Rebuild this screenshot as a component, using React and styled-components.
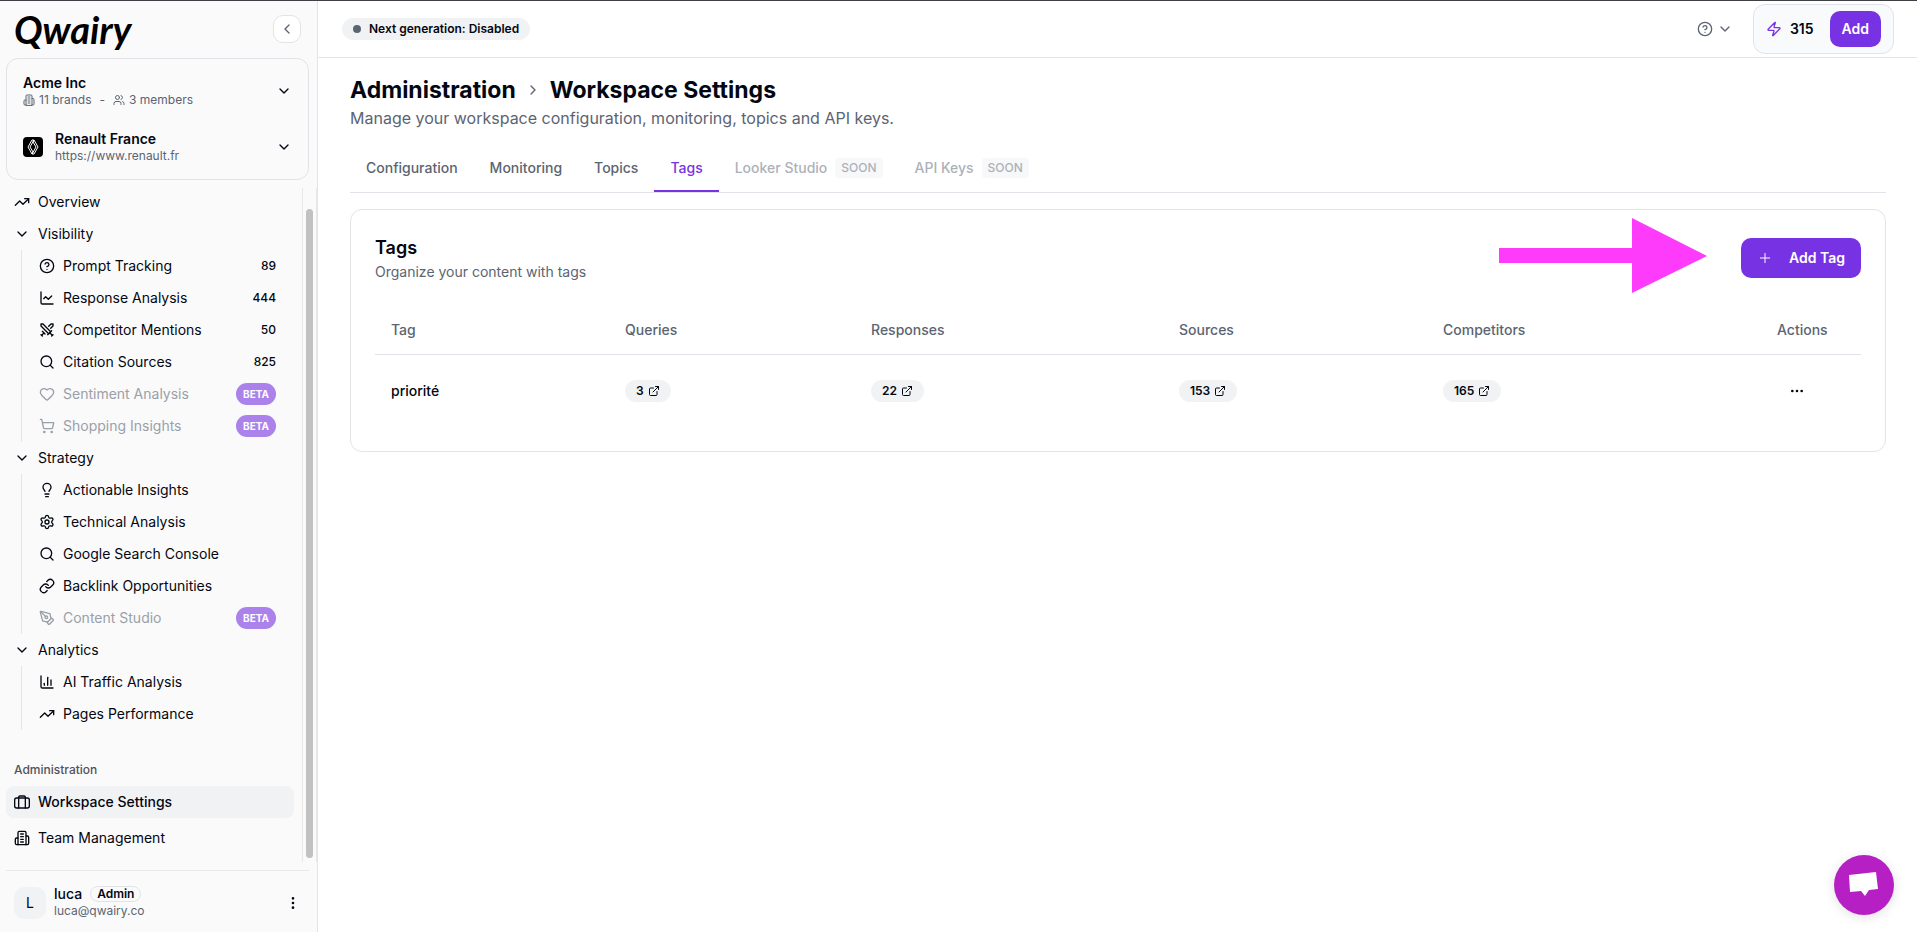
import React, { useState } from "react";
import { createGlobalStyle, styled } from "styled-components";
import {
  ChartColumn,
  ChartLine,
  ChevronDown,
  ChevronLeft,
  ChevronRight,
  CircleQuestionMark,
  Ellipsis,
  EllipsisVertical,
  ExternalLink,
  Heart,
  Lightbulb,
  Link,
  PenTool,
  Plus,
  Search,
  Settings,
  ShoppingCart,
  Swords,
  TrendingUp,
  Users,
  Zap,
} from "lucide-react";

const OutlineIcon = ({ size = 16, children }) => (
  <svg
    width={size}
    height={size}
    viewBox="0 0 24 24"
    fill="none"
    stroke="currentColor"
    strokeWidth="2"
    strokeLinecap="round"
    strokeLinejoin="round"
  >
    {children}
  </svg>
);

const SuitcaseIcon = () => (
  <OutlineIcon>
    <rect x="1" y="6" width="22" height="15" rx="3" />
    <path d="M7 21V5a2 2 0 0 1 2-2h6a2 2 0 0 1 2 2v16" />
  </OutlineIcon>
);

const BuildingIcon = ({ size }) => (
  <OutlineIcon size={size}>
    <path d="M6 22V4a2 2 0 0 1 2-2h8a2 2 0 0 1 2 2v18Z" />
    <path d="M6 12H4a2 2 0 0 0-2 2v6a2 2 0 0 0 2 2h2" />
    <path d="M18 9h2a2 2 0 0 1 2 2v9a2 2 0 0 1-2 2h-2" />
    <path d="M10 6h4M10 10h4M10 14h4M10 18h4" />
  </OutlineIcon>
);

const RenaultIcon = () => (
  <svg width="20" height="20" viewBox="0 0 20 20" fill="none" stroke="#fff">
    <rect width="20" height="20" rx="4" fill="#000" stroke="none" />
    <path d="M9 3 5 10l4 7 1-2-3-5 4-7z" />
    <path d="m11 17 4-7-4-7-1 2 3 5-4 7z" />
  </svg>
);

const groups = [
  {
    title: "Visibility",
    items: [
      { icon: CircleQuestionMark, label: "Prompt Tracking", count: 89 },
      { icon: ChartLine, label: "Response Analysis", count: 444 },
      { icon: Swords, label: "Competitor Mentions", count: 50 },
      { icon: Search, label: "Citation Sources", count: 825 },
      { icon: Heart, label: "Sentiment Analysis", beta: true },
      { icon: ShoppingCart, label: "Shopping Insights", beta: true },
    ],
  },
  {
    title: "Strategy",
    items: [
      { icon: Lightbulb, label: "Actionable Insights" },
      { icon: Settings, label: "Technical Analysis" },
      { icon: Search, label: "Google Search Console" },
      { icon: Link, label: "Backlink Opportunities" },
      { icon: PenTool, label: "Content Studio", beta: true },
    ],
  },
  {
    title: "Analytics",
    items: [
      { icon: ChartColumn, label: "AI Traffic Analysis" },
      { icon: TrendingUp, label: "Pages Performance" },
    ],
  },
];

const tabs = [
  { label: "Configuration" },
  { label: "Monitoring" },
  { label: "Topics" },
  { label: "Tags" },
  { label: "Looker Studio", soon: true },
  { label: "API Keys", soon: true },
];

const tags = [
  { name: "priorité", queries: 3, responses: 22, sources: 153, competitors: 165 },
];

const Sidebar = () => {
  return (
    <Aside>
      <SidebarTop>
        <Logo href="#">Qwairy</Logo>
        <CollapseButton aria-label="Collapse sidebar">
          <ChevronLeft size={16} />
        </CollapseButton>
      </SidebarTop>
      <Switcher>
        <SwitcherRow>
          <SwitcherText>
            <SwitcherName>Acme Inc</SwitcherName>
            <SwitcherMeta>
              <BuildingIcon size={12} />
              11 brands
              <Dash>-</Dash>
              <Users size={12} />3 members
            </SwitcherMeta>
          </SwitcherText>
          <ChevronDown size={16} />
        </SwitcherRow>
        <SwitcherRow>
          <RenaultIcon />
          <SwitcherText>
            <SwitcherName>Renault France</SwitcherName>
            <SwitcherMeta>https://www.renault.fr</SwitcherMeta>
          </SwitcherText>
          <ChevronDown size={16} />
        </SwitcherRow>
      </Switcher>
      <NavArea>
        <Nav>
          <NavLink href="#">
            <TrendingUp size={16} />
            Overview
          </NavLink>
          {groups.map((group) => (
            <React.Fragment key={group.title}>
              <GroupButton>
                <ChevronDown size={16} />
                {group.title}
              </GroupButton>
              <GroupItems>
                {group.items.map(({ icon: Icon, label, count, beta }) => (
                  <NavLink href="#" key={label} $muted={beta}>
                    <Icon size={16} />
                    <NavLabel>{label}</NavLabel>
                    {count && <Count>{count}</Count>}
                    {beta && <Beta>BETA</Beta>}
                  </NavLink>
                ))}
              </GroupItems>
            </React.Fragment>
          ))}
          <SectionTitle>Administration</SectionTitle>
          <AdminLinks>
            <NavLink href="#" $active>
              <SuitcaseIcon />
              Workspace Settings
            </NavLink>
            <NavLink href="#">
              <BuildingIcon />
              Team Management
            </NavLink>
          </AdminLinks>
        </Nav>
        <ScrollTrack>
          <ScrollThumb />
        </ScrollTrack>
      </NavArea>
      <UserRow>
        <Avatar>L</Avatar>
        <UserText>
          <UserName>
            luca <Role>Admin</Role>
          </UserName>
          <UserMail>luca@qwairy.co</UserMail>
        </UserText>
        <IconButton aria-label="Account menu">
          <EllipsisVertical size={16} />
        </IconButton>
      </UserRow>
    </Aside>
  );
};

const Topbar = () => {
  return (
    <Header>
      <Status>
        <Dot />
        Next generation: Disabled
      </Status>
      <HeaderActions>
        <HelpButton aria-label="Help">
          <CircleQuestionMark size={16} />
          <ChevronDown size={16} />
        </HelpButton>
        <Credits>
          <Zap size={16} />
          <strong>315</strong>
          <AddButton>Add</AddButton>
        </Credits>
      </HeaderActions>
    </Header>
  );
};

const CountLink = ({ value }) => (
  <CountPill href="#">
    {value}
    <ExternalLink size={12} />
  </CountPill>
);

const TagsCard = () => {
  return (
    <Card>
      <CardHeader>
        <div>
          <CardTitle>Tags</CardTitle>
          <CardText>Organize your content with tags</CardText>
        </div>
        <CardActions>
          <Arrow width="208" height="76" viewBox="0 0 208 76" aria-hidden="true">
            <path d="M0 30h133V0l75 38-75 37V45H0z" fill="#ff3bfb" />
          </Arrow>
          <AddTagButton>
            <Plus size={16} strokeWidth={1.5} />
            Add Tag
          </AddTagButton>
        </CardActions>
      </CardHeader>
      <Table>
        <colgroup>
          <Col $share={234} />
          <Col $share={246} />
          <Col $share={308} />
          <Col $share={264} />
          <Col $share={334} />
          <Col $share={100} />
        </colgroup>
        <thead>
          <tr>
            <Th>Tag</Th>
            <Th>Queries</Th>
            <Th>Responses</Th>
            <Th>Sources</Th>
            <Th>Competitors</Th>
            <Th>Actions</Th>
          </tr>
        </thead>
        <tbody>
          {tags.map((tag) => (
            <tr key={tag.name}>
              <Td>{tag.name}</Td>
              <Td>
                <CountLink value={tag.queries} />
              </Td>
              <Td>
                <CountLink value={tag.responses} />
              </Td>
              <Td>
                <CountLink value={tag.sources} />
              </Td>
              <Td>
                <CountLink value={tag.competitors} />
              </Td>
              <Td>
                <IconButton aria-label="Tag actions">
                  <Ellipsis size={16} />
                </IconButton>
              </Td>
            </tr>
          ))}
        </tbody>
      </Table>
    </Card>
  );
};

const App = () => {
  const [tab, setTab] = useState("Tags");

  return (
    <>
      <GlobalStyle />
      <Layout>
        <Sidebar />
        <Main>
          <Topbar />
          <Content>
            <Title>
              Administration
              <ChevronRight size={16} strokeWidth={2} />
              Workspace Settings
            </Title>
            <Subtitle>
              Manage your workspace configuration, monitoring, topics and API
              keys.
            </Subtitle>
            <Tabs role="tablist">
              {tabs.map(({ label, soon }) => (
                <Tab
                  key={label}
                  role="tab"
                  aria-selected={tab === label}
                  $active={tab === label}
                  disabled={soon}
                  onClick={() => setTab(label)}
                >
                  {label}
                  {soon && <Soon>SOON</Soon>}
                </Tab>
              ))}
            </Tabs>
            <TagsCard />
          </Content>
        </Main>
      </Layout>
      <ChatButton aria-label="Open chat">
        <svg width="30" height="26" viewBox="0 0 30 26" fill="#fff">
          <path d="M0 3 27 0l2 17-9 1-4 6-4-5-11 1z" />
        </svg>
      </ChatButton>
    </>
  );
};

const GlobalStyle = createGlobalStyle`
  * {
    box-sizing: border-box;
  }
  body {
    margin: 0;
    background: #fff;
    color: #030712;
    font-family: Inter, "Liberation Sans", sans-serif;
    font-size: 14px;
    line-height: 20px;
  }
  button {
    font: inherit;
    color: inherit;
    background: none;
    border: 0;
    padding: 0;
    cursor: pointer;
  }
  a {
    color: inherit;
    text-decoration: none;
  }
  svg {
    display: block;
    flex-shrink: 0;
  }
`;
const Layout = styled.div`
  display: flex;
  min-height: 100vh;
  border-top: 1px solid #3f3f46;
`;

const Aside = styled.aside`
  display: flex;
  flex-direction: column;
  flex-shrink: 0;
  width: 318px;
  background: #fafafa;
  border-right: 1px solid #e4e4e7;
`;
const SidebarTop = styled.div`
  display: flex;
  align-items: center;
  justify-content: space-between;
  height: 57px;
  padding: 0 16px 2px 14px;
`;
const Logo = styled.a`
  font-family: Lato, sans-serif;
  font-size: 38px;
  font-style: italic;
  font-weight: 700;
  line-height: 44px;
  color: #000;
`;
const CollapseButton = styled.button`
  display: grid;
  place-items: center;
  width: 28px;
  height: 28px;
  color: #5b6472;
  background: #fff;
  border: 1px solid #e4e4e7;
  border-radius: 10px;
`;
const Switcher = styled.div`
  margin: 0 8px 0 6px;
  padding: 4px 0;
  border: 1px solid #e1e3e8;
  border-radius: 12px;
`;
const SwitcherRow = styled.button`
  display: flex;
  align-items: center;
  gap: 12px;
  width: 100%;
  height: 56px;
  padding: 0 16px;
  text-align: left;
`;
const SwitcherText = styled.div`
  flex: 1;
`;
const SwitcherName = styled.div`
  font-weight: 600;
  line-height: 17px;
`;
const SwitcherMeta = styled.div`
  display: flex;
  align-items: center;
  gap: 4px;
  font-size: 12px;
  line-height: 17px;
  color: #5b6472;
`;
const Dash = styled.span`
  margin: 0 4px;
`;
const NavArea = styled.div`
  display: flex;
  flex: 1;
  padding: 6px 0 0 6px;
`;
const Nav = styled.nav`
  flex: 1;
  padding-right: 8px;
`;
const NavLabel = styled.span`
  flex: 1;
`;
const NavLink = styled.a`
  display: flex;
  align-items: center;
  gap: 8px;
  height: 32px;
  padding: 0 8px;
  border-radius: 8px;
  white-space: nowrap;
  background: ${({ $active }) => ($active ? "#f1f2f4" : "transparent")};
  color: ${({ $muted }) => ($muted ? "#5b6472" : "#030712")};
  font-weight: ${({ $active }) => ($active ? 500 : 400)};
  opacity: ${({ $muted }) => ($muted ? 0.6 : 1)};
`;
const GroupButton = styled.button`
  display: flex;
  align-items: center;
  gap: 8px;
  width: 100%;
  height: 32px;
  padding: 0 8px;
`;
const GroupItems = styled.div`
  margin: 0 10px 0 15px;
  padding-left: 9px;
  border-left: 1px solid #e4e4e7;
`;
const Count = styled.span`
  font-size: 12px;
  font-weight: 500;
`;
const Beta = styled.span`
  padding: 0 7px;
  border-radius: 12px;
  background: #7733e3;
  color: #fff;
  font-size: 10px;
  font-weight: 700;
  line-height: 22px;
`;
const SectionTitle = styled.div`
  height: 32px;
  margin-top: 24px;
  padding: 0 8px;
  font-size: 12px;
  font-weight: 500;
  line-height: 32px;
  color: #52525b;
`;
const AdminLinks = styled.div`
  display: grid;
  gap: 4px;
`;
const ScrollTrack = styled.div`
  display: flex;
  width: 15px;
  margin: 2px 0 8px;
  padding: 21px 3px 4px;
  border: 1px solid #e8e8e8;
  border-width: 0 1px;
`;
const ScrollThumb = styled.div`
  flex: 1;
  border-radius: 4px;
  background: #c1c1c1;
`;
const UserRow = styled.div`
  display: flex;
  align-items: center;
  gap: 8px;
  height: 62px;
  margin: 0 8px 0 6px;
  padding: 2px 8px 0;
  border-top: 1px solid #e9e9ec;
`;
const Avatar = styled.div`
  width: 32px;
  height: 32px;
  border-radius: 10px;
  background: #f1f2f4;
  line-height: 32px;
  text-align: center;
`;
const UserText = styled.div`
  flex: 1;
`;
const UserName = styled.div`
  display: flex;
  align-items: center;
  gap: 8px;
  font-weight: 500;
  line-height: 16px;
`;
const Role = styled.span`
  padding: 0 6px;
  border: 1px solid #e1e3e8;
  border-radius: 8px;
  font-size: 12px;
  font-weight: 600;
  line-height: 14px;
`;
const UserMail = styled.div`
  font-size: 12px;
  line-height: 17px;
  color: #5b6472;
`;
const IconButton = styled.button`
  display: grid;
  place-items: center;
  width: 16px;
  height: 40px;
  td & {
    width: 40px;
  }
`;

const Main = styled.main`
  flex: 1;
  min-width: 0;
`;
const Header = styled.header`
  display: flex;
  align-items: center;
  justify-content: space-between;
  height: 57px;
  padding: 0 23px 0 24px;
  border-bottom: 1px solid #e4e4e7;
`;
const Status = styled.div`
  display: flex;
  align-items: center;
  gap: 8px;
  height: 22px;
  padding: 0 11px;
  border-radius: 11px;
  background: #f1f2f4;
  font-size: 12px;
  font-weight: 600;
`;
const Dot = styled.span`
  width: 8px;
  height: 8px;
  border-radius: 50%;
  background: #5b6472;
`;
const HeaderActions = styled.div`
  display: flex;
  align-items: center;
  gap: 20px;
`;
const HelpButton = styled.button`
  display: flex;
  align-items: center;
  gap: 4px;
  color: #5b6472;
`;
const Credits = styled.div`
  display: flex;
  align-items: center;
  gap: 8px;
  height: 50px;
  padding: 0 12px;
  border: 1px solid #e1e3e8;
  border-radius: 12px;
  background: #f8fafc;
  svg {
    color: #7733e3;
  }
  strong {
    font-weight: 600;
  }
`;
const AddButton = styled.button`
  height: 36px;
  margin-left: 8px;
  padding: 0 12px;
  border-radius: 10px;
  background: #7733e3;
  color: #fff;
  font-weight: 600;
`;
const Content = styled.div`
  padding: 16px 31px 0 32px;
`;
const Title = styled.h1`
  display: flex;
  align-items: center;
  gap: 9px;
  margin: 0;
  font-size: 23px;
  font-weight: 700;
  line-height: 32px;
  svg {
    color: #5b6472;
  }
`;
const Subtitle = styled.p`
  margin: 0;
  font-size: 16px;
  line-height: 24px;
  color: #5b6472;
`;
const Tabs = styled.div`
  display: flex;
  margin-top: 13px;
  border-bottom: 1px solid #e1e3e8;
`;
const Tab = styled.button`
  display: flex;
  align-items: center;
  gap: 8px;
  height: 49px;
  padding: 2px 16px 0;
  border-bottom: 2px solid ${({ $active }) => ($active ? "#7733e3" : "transparent")};
  color: ${({ $active }) => ($active ? "#7733e3" : "#5b6472")};
  font-weight: 500;
  &:disabled {
    opacity: 0.5;
    cursor: default;
  }
`;
const Soon = styled.span`
  padding: 0 6px;
  border-radius: 4px;
  background: #f1f2f4;
  font-size: 12px;
`;
const Card = styled.section`
  margin-top: 16px;
  padding: 24px;
  border: 1px solid #e4e4e7;
  border-radius: 12px;
`;
const CardHeader = styled.div`
  display: flex;
  align-items: center;
  justify-content: space-between;
  height: 48px;
  margin-bottom: 24px;
`;
const CardTitle = styled.h2`
  margin: 0;
  font-size: 18px;
  font-weight: 600;
  line-height: 28px;
`;
const CardText = styled.p`
  margin: 0;
  line-height: 20px;
  color: #5b6472;
`;
const CardActions = styled.div`
  display: flex;
  align-items: center;
  gap: 34px;
`;
const Arrow = styled.svg`
  margin-top: -4px;
`;
const AddTagButton = styled.button`
  display: flex;
  align-items: center;
  gap: 16px;
  height: 40px;
  padding: 0 16px;
  border-radius: 10px;
  background: #7733e3;
  color: #fff;
  font-weight: 600;
`;
const Table = styled.table`
  width: 100%;
  table-layout: fixed;
  border-collapse: separate;
  border-spacing: 0;
`;
const Col = styled.col`
  width: ${({ $share }) => ($share / 1486) * 100}%;
`;
const Th = styled.th`
  height: 49px;
  padding: 0 16px;
  border-bottom: 1px solid #e1e3e8;
  color: #5b6472;
  font-weight: 500;
  text-align: left;
`;
const Td = styled.td`
  height: 72px;
  padding: 0 16px;
  font-weight: 500;
`;
const CountPill = styled.a`
  display: inline-flex;
  align-items: center;
  gap: 4px;
  height: 22px;
  padding: 0 11px;
  border-radius: 11px;
  background: #f1f2f4;
  font-size: 12px;
  font-weight: 600;
  vertical-align: middle;
`;
const ChatButton = styled.button`
  position: fixed;
  right: 23px;
  bottom: 17px;
  display: grid;
  place-items: center;
  width: 60px;
  height: 60px;
  border-radius: 50%;
  background: #b51fc3;
  box-shadow: 0 2px 12px rgba(0, 0, 0, 0.12);
`;

export default App;
